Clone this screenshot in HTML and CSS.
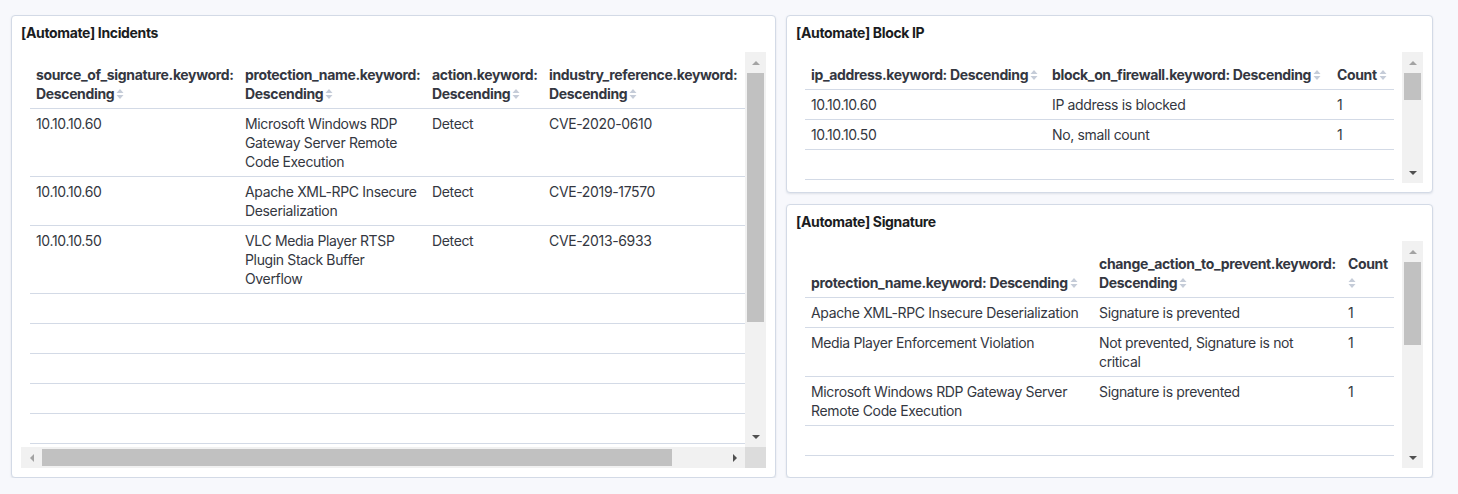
FILE: index.html
```html
<!DOCTYPE html>
<html lang="en">
<head>
  <meta charset="UTF-8">
  <title>[Automate] Dashboard</title>
  <link rel="stylesheet" href="styles.css">
</head>
<body>
<div class="dashboard">

  <!-- Incidents -->
  <div class="panel panel-incidents">
    <div class="panel-title">[Automate] Incidents</div>
    <div class="scroll-box both">
      <div class="scroll-view">
        <table class="data-table incidents-table">
          <colgroup>
            <col class="w-209"><col class="w-187"><col class="w-117"><col class="w-200"><col class="w-55">
          </colgroup>
          <thead>
            <tr>
              <th>source_of_signature.keyword:<br>Descending<svg class="sort" viewBox="0 0 8 12"><path d="M4 1 L7.5 5 H0.5 Z M4 11 L7.5 7 H0.5 Z"/></svg></th>
              <th>protection_name.keyword:<br>Descending<svg class="sort" viewBox="0 0 8 12"><path d="M4 1 L7.5 5 H0.5 Z M4 11 L7.5 7 H0.5 Z"/></svg></th>
              <th>action.keyword:<br>Descending<svg class="sort" viewBox="0 0 8 12"><path d="M4 1 L7.5 5 H0.5 Z M4 11 L7.5 7 H0.5 Z"/></svg></th>
              <th>industry_reference.keyword:<br>Descending<svg class="sort" viewBox="0 0 8 12"><path d="M4 1 L7.5 5 H0.5 Z M4 11 L7.5 7 H0.5 Z"/></svg></th>
              <th>Count<svg class="sort" viewBox="0 0 8 12"><path d="M4 1 L7.5 5 H0.5 Z M4 11 L7.5 7 H0.5 Z"/></svg></th>
            </tr>
          </thead>
          <tbody>
            <tr><td>10.10.10.60</td><td>Microsoft Windows RDP<br>Gateway Server Remote<br>Code Execution</td><td>Detect</td><td>CVE-2020-0610</td><td>1</td></tr>
            <tr><td>10.10.10.60</td><td>Apache XML-RPC Insecure<br>Deserialization</td><td>Detect</td><td>CVE-2019-17570</td><td>1</td></tr>
            <tr><td>10.10.10.50</td><td>VLC Media Player RTSP<br>Plugin Stack Buffer<br>Overflow</td><td>Detect</td><td>CVE-2013-6933</td><td>1</td></tr>
            <tr><td>&nbsp;</td><td></td><td></td><td></td><td></td></tr>
            <tr><td>&nbsp;</td><td></td><td></td><td></td><td></td></tr>
            <tr><td>&nbsp;</td><td></td><td></td><td></td><td></td></tr>
            <tr><td>&nbsp;</td><td></td><td></td><td></td><td></td></tr>
            <tr><td>&nbsp;</td><td></td><td></td><td></td><td></td></tr>
            <tr><td>&nbsp;</td><td></td><td></td><td></td><td></td></tr>
            <tr><td>&nbsp;</td><td></td><td></td><td></td><td></td></tr>
          </tbody>
        </table>
      </div>
      <div class="vbar">
        <div class="sb-btn"><span class="arrow up off"></span></div>
        <div class="thumb v-thumb incidents-v"></div>
        <div class="spacer"></div>
        <div class="sb-btn"><span class="arrow down"></span></div>
      </div>
      <div class="hbar">
        <div class="sb-btn"><span class="arrow left off"></span></div>
        <div class="thumb h-thumb incidents-h"></div>
        <div class="spacer"></div>
        <div class="sb-btn"><span class="arrow right"></span></div>
      </div>
      <div class="corner"></div>
    </div>
  </div>

  <div class="side">
    <!-- Block IP -->
    <div class="panel panel-block">
      <div class="panel-title">[Automate] Block IP</div>
      <div class="scroll-box">
        <div class="scroll-view pad-right">
          <table class="data-table full">
            <colgroup>
              <col class="w-241"><col class="w-285"><col class="w-63">
            </colgroup>
            <thead>
              <tr>
                <th>ip_address.keyword: Descending<svg class="sort" viewBox="0 0 8 12"><path d="M4 1 L7.5 5 H0.5 Z M4 11 L7.5 7 H0.5 Z"/></svg></th>
                <th>block_on_firewall.keyword: Descending<svg class="sort" viewBox="0 0 8 12"><path d="M4 1 L7.5 5 H0.5 Z M4 11 L7.5 7 H0.5 Z"/></svg></th>
                <th>Count<svg class="sort" viewBox="0 0 8 12"><path d="M4 1 L7.5 5 H0.5 Z M4 11 L7.5 7 H0.5 Z"/></svg></th>
              </tr>
            </thead>
            <tbody>
              <tr><td>10.10.10.60</td><td>IP address is blocked</td><td>1</td></tr>
              <tr><td>10.10.10.50</td><td>No, small count</td><td>1</td></tr>
              <tr><td>&nbsp;</td><td></td><td></td></tr>
              <tr><td>&nbsp;</td><td></td><td></td></tr>
              <tr><td>&nbsp;</td><td></td><td></td></tr>
            </tbody>
          </table>
        </div>
        <div class="vbar">
          <div class="sb-btn"><span class="arrow up off"></span></div>
          <div class="thumb v-thumb block-v"></div>
          <div class="spacer"></div>
          <div class="sb-btn"><span class="arrow down"></span></div>
        </div>
      </div>
    </div>

    <!-- Signature -->
    <div class="panel panel-signature">
      <div class="panel-title">[Automate] Signature</div>
      <div class="scroll-box">
        <div class="scroll-view pad-right">
          <table class="data-table full">
            <colgroup>
              <col class="w-288"><col class="w-249"><col class="w-52">
            </colgroup>
            <thead>
              <tr>
                <th>protection_name.keyword: Descending<svg class="sort" viewBox="0 0 8 12"><path d="M4 1 L7.5 5 H0.5 Z M4 11 L7.5 7 H0.5 Z"/></svg></th>
                <th>change_action_to_prevent.keyword:<br>Descending<svg class="sort" viewBox="0 0 8 12"><path d="M4 1 L7.5 5 H0.5 Z M4 11 L7.5 7 H0.5 Z"/></svg></th>
                <th>Count<br><svg class="sort no-gap" viewBox="0 0 8 12"><path d="M4 1 L7.5 5 H0.5 Z M4 11 L7.5 7 H0.5 Z"/></svg></th>
              </tr>
            </thead>
            <tbody>
              <tr><td>Apache XML-RPC Insecure Deserialization</td><td>Signature is prevented</td><td>1</td></tr>
              <tr><td>Media Player Enforcement Violation</td><td>Not prevented, Signature is not<br>critical</td><td>1</td></tr>
              <tr><td>Microsoft Windows RDP Gateway Server<br>Remote Code Execution</td><td>Signature is prevented</td><td>1</td></tr>
              <tr><td>&nbsp;</td><td></td><td></td></tr>
              <tr><td>&nbsp;</td><td></td><td></td></tr>
              <tr><td>&nbsp;</td><td></td><td></td></tr>
            </tbody>
          </table>
        </div>
        <div class="vbar">
          <div class="sb-btn"><span class="arrow up off"></span></div>
          <div class="thumb v-thumb signature-v"></div>
          <div class="spacer"></div>
          <div class="sb-btn"><span class="arrow down"></span></div>
        </div>
      </div>
    </div>
  </div>

</div>
</body>
</html>
```

FILE: styles.css
```css
body {
  margin: 0;
  font-family: Inter, "Noto Sans", sans-serif;
  letter-spacing: -0.35px;
  background-color: #f7f8fc;
  color: #343741;
}

.dashboard {
  display: flex;
  gap: 10px;
  padding: 15px 25px 0 11px;
  height: 463px;
}

.side {
  display: flex;
  flex-direction: column;
  gap: 11px;
  width: 647px;
  flex-shrink: 0;
}

.panel {
  box-sizing: border-box;
  background: #fff;
  border: 1px solid #d3dae6;
  border-radius: 4px;
  box-shadow: 0 1px 2px rgba(152, 162, 179, 0.25);
  padding: 8px 9px 9px 9px;
  display: flex;
  flex-direction: column;
  overflow: hidden;
}

.panel-incidents {
  width: 765px;
  height: 463px;
  flex-shrink: 0;
}

.panel-block {
  height: 178px;
}

.panel-signature {
  flex: 1;
}

.panel-title {
  height: 28px;
  line-height: 18px;
  font-size: 14px;
  font-weight: 700;
  color: #1a1c21;
  flex-shrink: 0;
}

/* scroll area with drawn scrollbars */
.scroll-box {
  flex: 1;
  min-height: 0;
  display: grid;
  grid-template-columns: 1fr 21px;
  grid-template-rows: 1fr;
}

.scroll-box.both {
  grid-template-rows: 1fr 21px;
}

.scroll-view {
  overflow: hidden;
  padding: 8px 0 0 9px;
  min-width: 0;
}

.scroll-view.pad-right {
  padding-right: 10px;
}

.vbar, .hbar {
  background: #f1f1f1;
  display: flex;
}

.vbar {
  flex-direction: column;
}

.sb-btn {
  width: 21px;
  height: 21px;
  flex-shrink: 0;
  display: flex;
  align-items: center;
  justify-content: center;
}

.spacer {
  flex: 1;
}

.thumb {
  background: #c1c1c1;
}

.v-thumb {
  margin: 0 2px;
}

.h-thumb {
  margin: 2px 0;
}

.incidents-v { height: 249px; }
.block-v { height: 27px; }
.signature-v { height: 83px; }
.incidents-h { width: 630px; }

.corner {
  background: #dcdcdc;
}

.arrow {
  width: 0;
  height: 0;
  border: 4px solid transparent;
}

.arrow.up {
  border-bottom: 4px solid #505050;
  border-top-width: 0;
}

.arrow.down {
  border-top: 4px solid #505050;
  border-bottom-width: 0;
}

.arrow.left {
  border-right: 4px solid #505050;
  border-left-width: 0;
}

.arrow.right {
  border-left: 4px solid #505050;
  border-right-width: 0;
}

.arrow.up.off { border-bottom-color: #a3a3a3; }
.arrow.left.off { border-right-color: #a3a3a3; }

/* tables */
.data-table {
  border-collapse: collapse;
  table-layout: fixed;
  font-size: 14px;
  line-height: 19px;
}

.data-table.full {
  width: 100%;
}

.incidents-table {
  width: 768px;
}

.data-table th,
.data-table td {
  padding: 5px 6px;
  text-align: left;
  border-bottom: 1px solid #d3dae6;
  white-space: nowrap;
  overflow: hidden;
}

.data-table th {
  font-weight: 700;
  vertical-align: bottom;
  color: #343741;
}

.data-table td {
  vertical-align: top;
}

.sort {
  width: 8px;
  height: 12px;
  margin-left: 2px;
  vertical-align: -1px;
  fill: #c5ccd8;
}

.sort.no-gap {
  margin-left: 0;
}

.w-209 { width: 209px; }
.w-187 { width: 187px; }
.w-117 { width: 117px; }
.w-200 { width: 200px; }
.w-55 { width: 55px; }
.w-241 { width: 241px; }
.w-285 { width: 285px; }
.w-63 { width: 63px; }
.w-288 { width: 288px; }
.w-249 { width: 249px; }
.w-52 { width: 52px; }
```
